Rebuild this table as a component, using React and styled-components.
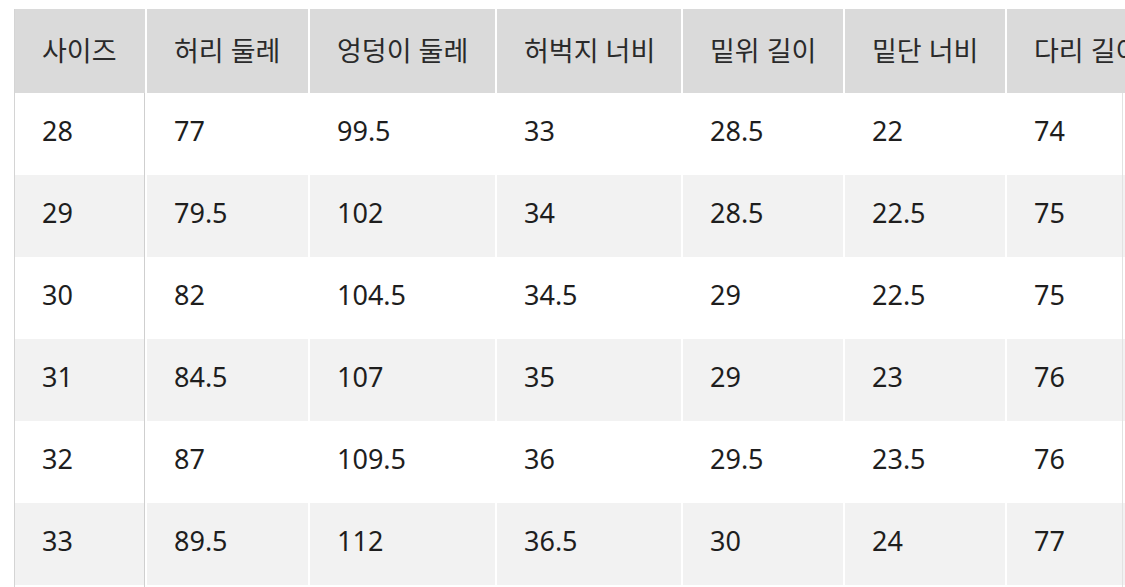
import React from "react";
import styled, { createGlobalStyle } from "styled-components";

const Global = createGlobalStyle`
  html, body { margin: 0; padding: 0; background: #ffffff; }
  body { font-family: "Noto Sans", "Noto Sans CJK KR", sans-serif; }
`;

const Page = styled.div`
  width: 1125px;
  height: 587px;
  padding: 9px 0 0 14px;
  box-sizing: border-box;
  overflow: hidden;
`;

const Scroller = styled.div`
  position: relative;
  width: 1111px;
  border-left: 1px solid #d4d4d4;
  overflow: hidden;

  &::after {
    content: "";
    position: absolute;
    top: 84px;
    bottom: 0;
    right: 3px;
    width: 1px;
    background: #e2e2e2;
  }
`;

const Table = styled.table`
  border-collapse: separate;
  border-spacing: 2px 0;
  margin-left: -2px;
  table-layout: fixed;
  width: ${(p) => p.$width}px;
`;

const Col = styled.col`
  width: ${(p) => p.$w}px;
`;

const HeadCell = styled.th`
  background: #dadada;
  height: 84px;
  padding: 0 0 4px 27px;
  text-align: left;
  font-weight: 400;
  font-size: 27px;
  color: #2a2a2a;
  white-space: nowrap;
  overflow: hidden;
  box-sizing: border-box;
`;

const Row = styled.tr`
  background: ${(p) => (p.$alt ? "#f2f2f2" : "#ffffff")};
`;

const Cell = styled.td`
  background: inherit;
  height: 82px;
  padding: 0 0 7px 27px;
  box-sizing: border-box;
  font-size: 27px;
  color: #1e1e1e;
  white-space: nowrap;
  ${(p) => (p.$first ? "box-shadow: inset -1px 0 0 #cfcfcf;" : "")}
`;

const headers = ["사이즈", "허리 둘레", "엉덩이 둘레", "허벅지 너비", "밑위 길이", "밑단 너비", "다리 길이"];
const widths = [130, 161, 185, 184, 160, 160, 200];

const rows = [
  ["28", "77", "99.5", "33", "28.5", "22", "74"],
  ["29", "79.5", "102", "34", "28.5", "22.5", "75"],
  ["30", "82", "104.5", "34.5", "29", "22.5", "75"],
  ["31", "84.5", "107", "35", "29", "23", "76"],
  ["32", "87", "109.5", "36", "29.5", "23.5", "76"],
  ["33", "89.5", "112", "36.5", "30", "24", "77"],
  ["34", "92", "114.5", "37", "30.5", "24.5", "78"],
];

export default function App() {
  const total = widths.reduce((a, b) => a + b, 0) + 2 * (widths.length + 1);
  return (
    <>
      <Global />
      <Page>
        <Scroller>
          <Table $width={total}>
            <colgroup>
              {widths.map((w, i) => (
                <Col key={i} $w={w} />
              ))}
            </colgroup>
            <thead>
              <tr>
                {headers.map((h) => (
                  <HeadCell key={h}>{h}</HeadCell>
                ))}
              </tr>
            </thead>
            <tbody>
              {rows.map((r, i) => (
                <Row key={r[0]} $alt={i % 2 === 1}>
                  {r.map((v, j) => (
                    <Cell key={j} $first={j === 0}>
                      {v}
                    </Cell>
                  ))}
                </Row>
              ))}
            </tbody>
          </Table>
        </Scroller>
      </Page>
    </>
  );
}
